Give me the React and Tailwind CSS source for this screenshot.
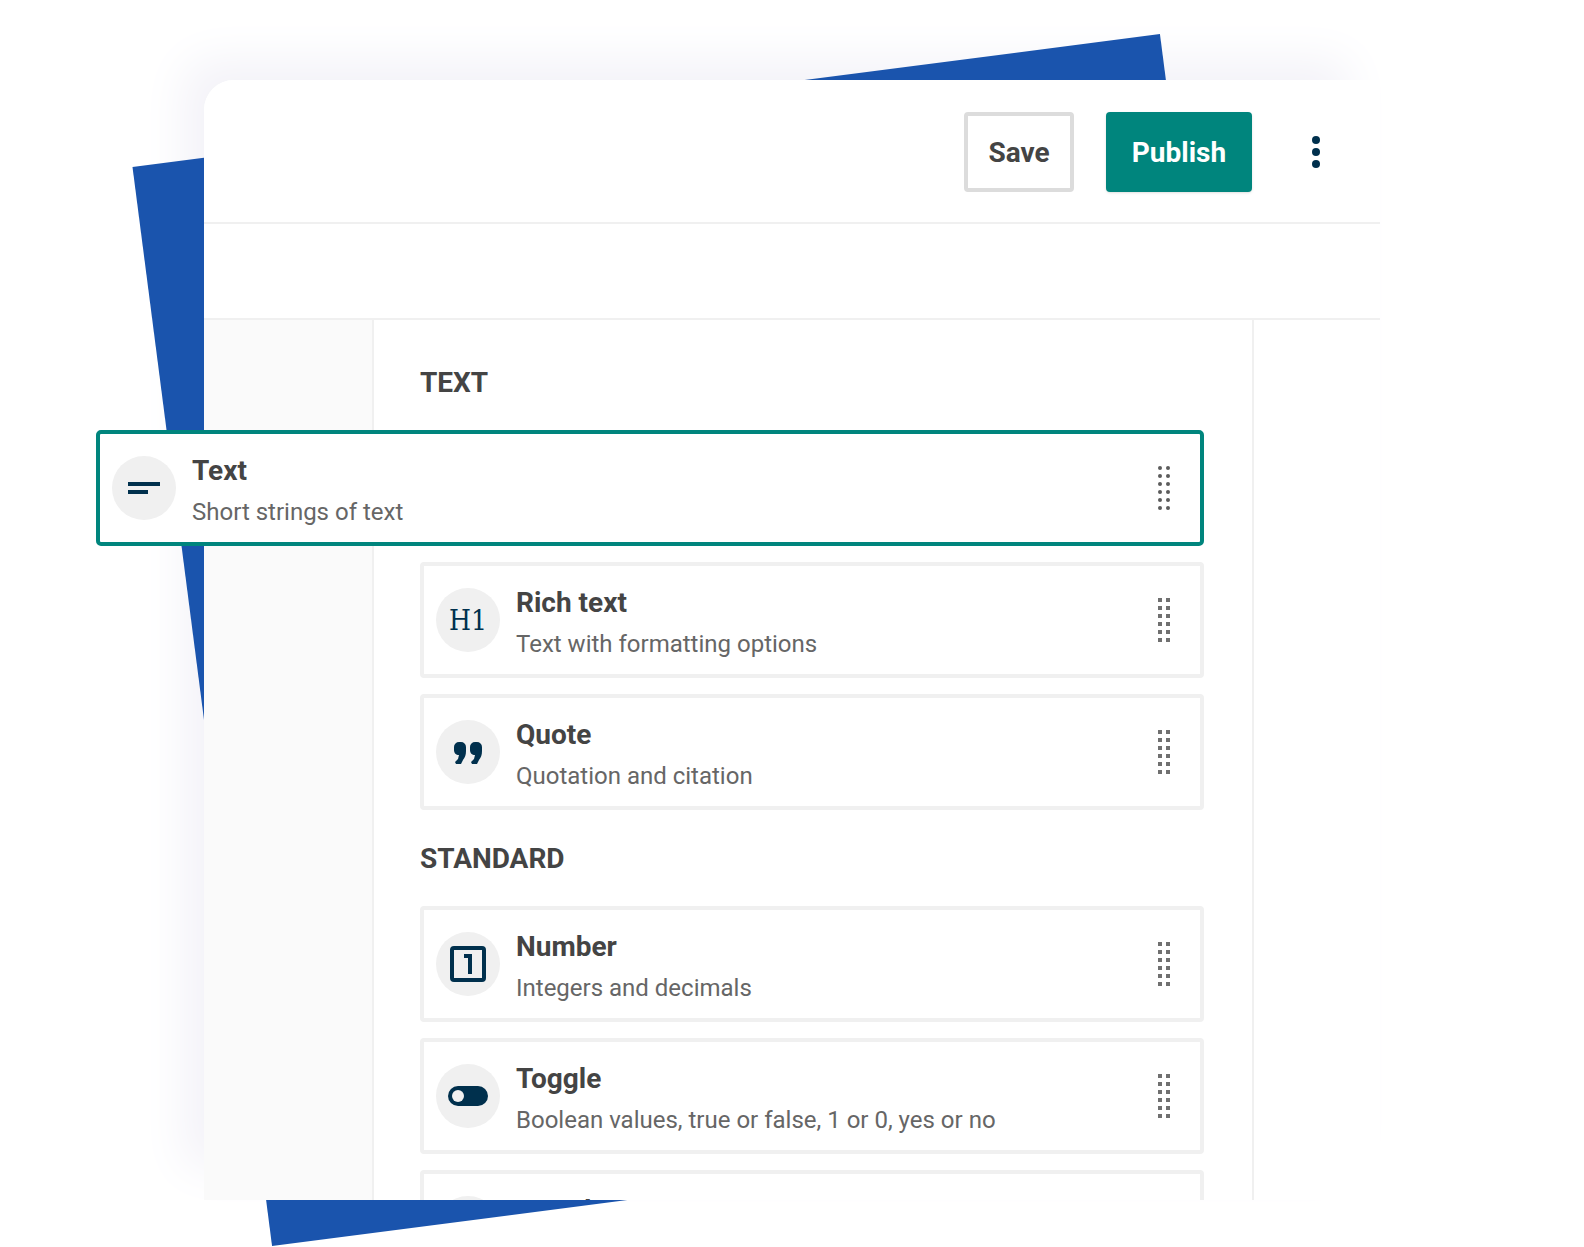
// App.jsx
const groups = [
  {
    label: 'TEXT',
    fields: [
      { name: 'Text', hint: 'Short strings of text', icon: ShortTextIcon, lifted: true },
      { name: 'Rich text', hint: 'Text with formatting options', icon: RichTextIcon },
      { name: 'Quote', hint: 'Quotation and citation', icon: QuoteIcon },
    ],
  },
  {
    label: 'STANDARD',
    fields: [
      { name: 'Number', hint: 'Integers and decimals', icon: NumberIcon },
      { name: 'Toggle', hint: 'Boolean values, true or false, 1 or 0, yes or no', icon: ToggleIcon },
      { name: 'Dropdown', hint: 'Choose from a list of options', icon: DropdownIcon },
    ],
  },
];

function ShortTextIcon() {
  return (
    <svg viewBox="0 0 64 64" className="size-16" fill="currentColor">
      <path d="M16 26h32v4H16zM16 34h20v4H16z" />
    </svg>
  );
}

function RichTextIcon() {
  return (
    <span className="pt-0.5 font-['DejaVu_Serif_Condensed','DejaVu_Serif',serif] text-[28px] leading-8">H1</span>
  );
}

function QuoteIcon() {
  return (
    <svg viewBox="0 0 64 64" className="size-16" fill="currentColor">
      <path d="M18 27a5 5 0 0 1 5-5h2a5 5 0 0 1 5 5v4c0 4-1 6-3 9l-2 4h-5l-1-2 3-3 1-4c-3 0-5-2-5-5z" />
      <path d="M34 27a5 5 0 0 1 5-5h2a5 5 0 0 1 5 5v4c0 4-1 6-3 9l-2 4h-5l-1-2 3-3 1-4c-3 0-5-2-5-5z" />
    </svg>
  );
}

function NumberIcon() {
  return (
    <svg viewBox="0 0 64 64" className="size-16" fill="currentColor">
      <rect x="16" y="16" width="32" height="32" rx="2" fill="none" stroke="currentColor" strokeWidth="4" />
      <path d="M28 22h8v20h-4V26h-4z" />
    </svg>
  );
}

function ToggleIcon() {
  return (
    <svg viewBox="0 0 64 64" className="size-16" fill="currentColor">
      <rect x="12" y="22" width="40" height="20" rx="10" />
      <circle cx="22" cy="32" r="6" fill="#f0f0f0" />
    </svg>
  );
}

function DropdownIcon() {
  return (
    <svg viewBox="0 0 64 64" className="size-16" fill="currentColor">
      <path d="M22 28h20L32 38z" />
    </svg>
  );
}

function Grip({ round }) {
  const rx = round ? 2 : 0;
  return (
    <svg viewBox="0 0 12 44" className="h-11 w-3 shrink-0" fill={round ? '#5c5c5c' : '#707070'}>
      {[0, 8, 16, 24, 32, 40].map((y) => (
        <g key={y}>
          <rect x="0" y={y} width="4" height="4" rx={rx} />
          <rect x="8" y={y} width="4" height="4" rx={rx} />
        </g>
      ))}
    </svg>
  );
}

function Field({ name, hint, icon: Icon, lifted }) {
  return (
    <li
      className={
        lifted
          ? 'relative z-10 -ml-[324px] flex h-[116px] items-center gap-4 rounded-[5px] border-4 border-[#00857d] bg-white pr-[30px] pl-3'
          : 'flex h-[116px] items-center gap-4 rounded border-4 border-[#f0f0f0] bg-white pr-[30px] pl-3'
      }
    >
      <div className="flex size-16 shrink-0 items-center justify-center rounded-full bg-[#f0f0f0] text-[#00304d]">
        <Icon />
      </div>
      <div className="min-w-0 flex-1 pt-2">
        <h3 className="text-[28px] leading-10 font-bold text-[#444444]">{name}</h3>
        <p className="text-2xl leading-[42px] text-[#666666]">{hint}</p>
      </div>
      <Grip round={lifted} />
    </li>
  );
}

export default function App() {
  return (
    <div className="flex h-screen flex-col overflow-hidden bg-white px-[204px] pt-20 pb-[47px] font-[Roboto,sans-serif]">
      <div className="relative flex min-h-0 flex-1 flex-col rounded-tl-[30px] shadow-[-26px_-26px_48px_-6px_#f3f2f8]">
        {/* tilted backdrop */}
        <div className="absolute top-4 right-[146px] bottom-4 -left-1.5 rotate-[-7.37deg] bg-[#1a54ad]" />

        <main className="relative flex min-h-0 flex-1 flex-col overflow-y-clip rounded-tl-[30px] bg-white">
          <header className="flex shrink-0 items-center justify-end gap-8 border-b-2 border-[#f0f0f0] px-8 pt-8 pb-[30px]">
            <button className="h-20 w-[110px] rounded border-4 border-[#dcdcdc] pt-0.5 text-[28px] font-bold text-[#444444]">
              Save
            </button>
            <button className="h-20 w-[146px] rounded bg-[#00857d] pt-0.5 text-[28px] font-bold text-white shadow-sm">
              Publish
            </button>
            <button aria-label="More actions" className="flex h-20 w-16 items-center justify-center text-[#00304d]">
              <svg viewBox="0 0 8 32" className="h-8 w-2" fill="currentColor">
                <circle cx="4" cy="4" r="4" />
                <circle cx="4" cy="16" r="4" />
                <circle cx="4" cy="28" r="4" />
              </svg>
            </button>
          </header>

          <div className="h-24 shrink-0 border-b-2 border-[#f0f0f0]" />

          <div className="flex min-h-0 flex-1">
            <aside className="w-[170px] shrink-0 border-r-2 border-[#f0f0f0] bg-[#fafafa]" />
            <div className="min-w-0 flex-1 pt-3.5 pr-12 pl-[46px]">
              {groups.map((group) => (
                <section key={group.label}>
                  <h2 className="pt-[29px] pb-[27px] text-[28px] leading-10 font-bold text-[#444444]">
                    {group.label}
                  </h2>
                  <ul className="flex flex-col gap-4">
                    {group.fields.map((field) => (
                      <Field key={field.name} {...field} />
                    ))}
                  </ul>
                </section>
              ))}
            </div>
            <aside className="w-32 shrink-0 border-l-2 border-[#f0f0f0]" />
          </div>
        </main>
      </div>
    </div>
  );
}
